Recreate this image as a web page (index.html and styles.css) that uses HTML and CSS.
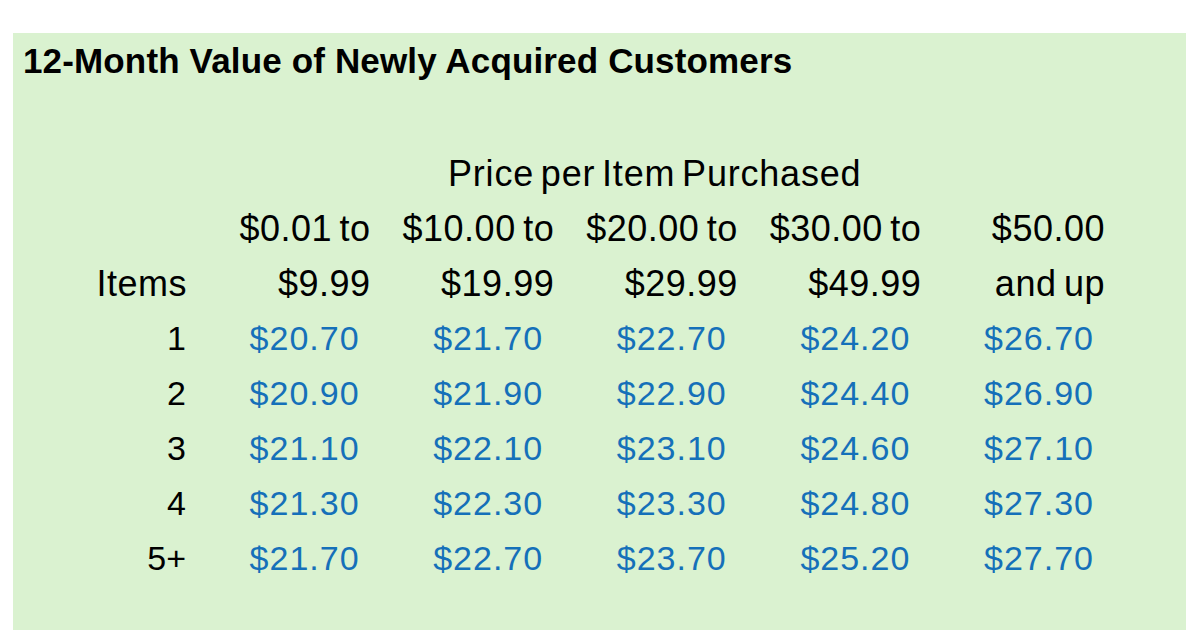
FILE: index.html
```html
<!DOCTYPE html>
<html>
<head>
<meta charset="utf-8">
<link rel="stylesheet" href="styles.css">
</head>
<body>
<div class="sheet">
  <div class="title">12-Month Value of Newly Acquired Customers</div>
  <div class="grid">
    <div class="cell"></div>
    <div class="cell span5 group">Price per Item Purchased</div>

    <div class="cell"></div>
    <div class="cell head">$0.01 to</div>
    <div class="cell head">$10.00 to</div>
    <div class="cell head">$20.00 to</div>
    <div class="cell head">$30.00 to</div>
    <div class="cell head">$50.00</div>

    <div class="cell head">Items</div>
    <div class="cell head">$9.99</div>
    <div class="cell head">$19.99</div>
    <div class="cell head">$29.99</div>
    <div class="cell head">$49.99</div>
    <div class="cell head">and up</div>

    <div class="cell label">1</div>
    <div class="cell num">$20.70</div>
    <div class="cell num">$21.70</div>
    <div class="cell num">$22.70</div>
    <div class="cell num">$24.20</div>
    <div class="cell num">$26.70</div>

    <div class="cell label">2</div>
    <div class="cell num">$20.90</div>
    <div class="cell num">$21.90</div>
    <div class="cell num">$22.90</div>
    <div class="cell num">$24.40</div>
    <div class="cell num">$26.90</div>

    <div class="cell label">3</div>
    <div class="cell num">$21.10</div>
    <div class="cell num">$22.10</div>
    <div class="cell num">$23.10</div>
    <div class="cell num">$24.60</div>
    <div class="cell num">$27.10</div>

    <div class="cell label">4</div>
    <div class="cell num">$21.30</div>
    <div class="cell num">$22.30</div>
    <div class="cell num">$23.30</div>
    <div class="cell num">$24.80</div>
    <div class="cell num">$27.30</div>

    <div class="cell label">5+</div>
    <div class="cell num">$21.70</div>
    <div class="cell num">$22.70</div>
    <div class="cell num">$23.70</div>
    <div class="cell num">$25.20</div>
    <div class="cell num">$27.70</div>
  </div>
</div>
</body>
</html>
```

FILE: styles.css
```css
html, body {
  margin: 0;
  padding: 0;
  background: #ffffff;
}

body {
  padding: 33px 0 0 13px;
  font-family: "Liberation Sans", Arial, sans-serif;
  color: #000;
}

.sheet {
  width: 1173px;
  height: 597px;
  background: #DAF2D0;
}

.title {
  height: 56px;
  line-height: 56px;
  padding-left: 10px;
  font-weight: bold;
  font-size: 35px;
  letter-spacing: 0.15px;
  white-space: nowrap;
}

.grid {
  margin-top: 57px;
  display: grid;
  grid-template-columns: 173px repeat(5, 183.6px);
  grid-auto-rows: 55px;
}

.cell {
  line-height: 55px;
  white-space: nowrap;
  text-align: right;
}

.span5 {
  grid-column: span 5;
}

.group {
  text-align: left;
  padding-left: 262px;
  font-size: 36px;
  letter-spacing: 0.8px;
  word-spacing: -4px;
}

.head {
  font-size: 36px;
  letter-spacing: 0.5px;
  word-spacing: -3px;
  margin-right: -1px;
}

.label {
  font-size: 34px;
}

.num {
  font-size: 34px;
  letter-spacing: 1px;
  padding-right: 10px;
  color: #1570B9;
}
```
